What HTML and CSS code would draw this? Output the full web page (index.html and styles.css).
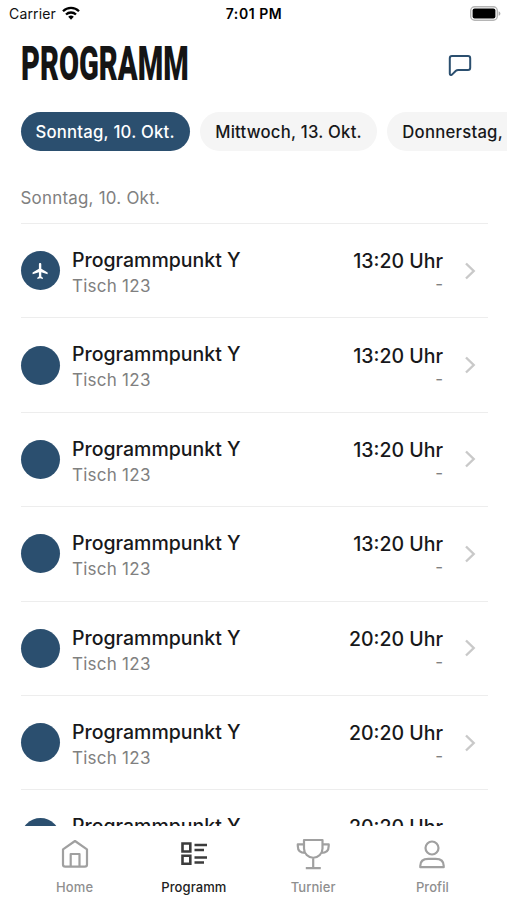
FILE: index.html
```html
<!DOCTYPE html>
<html lang="de">
<head>
<meta charset="utf-8">
<meta name="viewport" content="width=device-width, initial-scale=1">
<title>Programm</title>
<link rel="stylesheet" href="styles.css">
</head>
<body>
<div class="app">
  <div class="status">
    <div class="carrier"><span>Carrier</span>
      <svg width="18" height="14" viewBox="0 0 18 14" fill="none" stroke="#000" stroke-width="2.3"><path d="M1 5.2a11.4 11.4 0 0 1 16 0M4 8.5a7.2 7.2 0 0 1 10 0"/><path d="M9 13.7l-2.8-2.9a4 4 0 0 1 5.6 0z" fill="#000" stroke="none"/></svg>
    </div>
    <div class="clock">7:01 PM</div>
    <div class="battery"><svg width="31" height="15" viewBox="0 0 31 15"><rect x=".7" y=".7" width="26.6" height="13.6" rx="4" fill="#fff" stroke="#b5b5b5" stroke-width="1.4"/><rect x="2.6" y="2.6" width="22.8" height="9.8" rx="2" fill="#000"/><path d="M28.6 5.2c2.4 1 2.4 3.6 0 4.6z" fill="#aaa"/></svg></div>
  </div>
  <header class="header">
    <h1 class="title">PROGRAMM</h1>
    <svg class="chat" width="24" height="24" viewBox="0 0 24 24" fill="none" stroke="#2b4f6f" stroke-width="2" stroke-linejoin="round"><path d="M4 2h16q2.2 0 2.2 2.2v9.600q0 2.200-2.200 2.200H10.200q-1.400 0-2.300.8L4 20.600q-2.200 1.200-2.200-1V4.200Q1.800 2 4 2z"/></svg>
  </header>
  <div class="chips">
    <div class="chip active">Sonntag, 10. Okt.</div>
    <div class="chip">Mittwoch, 13. Okt.</div>
    <div class="chip last">Donnerstag,</div>
  </div>
  <main class="list">
    <h2 class="day">Sonntag, 10. Okt.</h2>
    <div class="row"><div class="dot"><svg width="19" height="20" viewBox="0 0 24 24" fill="#fff"><path d="M21 16v-2l-8-5V3.500C13 2.670 12.330 2 11.500 2S10 2.670 10 3.500V9l-8 5v2l8-2.500V19l-2 1.500V22l3.500-1 3.500 1v-1.500L13 19v-5.500z"/></svg></div><div class="info"><div class="name">Programmpunkt Y</div><div class="place">Tisch 123</div></div><div class="when"><div class="time">13:20 Uhr</div><div class="dash">-</div></div><svg class="chev" width="12" height="18" viewBox="0 0 12 18"><path d="M2 1.500l7.700 7.500L2 16.500"/></svg></div>
    <div class="row"><div class="dot"></div><div class="info"><div class="name">Programmpunkt Y</div><div class="place">Tisch 123</div></div><div class="when"><div class="time">13:20 Uhr</div><div class="dash">-</div></div><svg class="chev" width="12" height="18" viewBox="0 0 12 18"><path d="M2 1.500l7.700 7.500L2 16.500"/></svg></div>
    <div class="row"><div class="dot"></div><div class="info"><div class="name">Programmpunkt Y</div><div class="place">Tisch 123</div></div><div class="when"><div class="time">13:20 Uhr</div><div class="dash">-</div></div><svg class="chev" width="12" height="18" viewBox="0 0 12 18"><path d="M2 1.500l7.700 7.500L2 16.500"/></svg></div>
    <div class="row"><div class="dot"></div><div class="info"><div class="name">Programmpunkt Y</div><div class="place">Tisch 123</div></div><div class="when"><div class="time">13:20 Uhr</div><div class="dash">-</div></div><svg class="chev" width="12" height="18" viewBox="0 0 12 18"><path d="M2 1.500l7.700 7.500L2 16.500"/></svg></div>
    <div class="row"><div class="dot"></div><div class="info"><div class="name">Programmpunkt Y</div><div class="place">Tisch 123</div></div><div class="when"><div class="time">20:20 Uhr</div><div class="dash">-</div></div><svg class="chev" width="12" height="18" viewBox="0 0 12 18"><path d="M2 1.500l7.700 7.500L2 16.500"/></svg></div>
    <div class="row"><div class="dot"></div><div class="info"><div class="name">Programmpunkt Y</div><div class="place">Tisch 123</div></div><div class="when"><div class="time">20:20 Uhr</div><div class="dash">-</div></div><svg class="chev" width="12" height="18" viewBox="0 0 12 18"><path d="M2 1.500l7.700 7.500L2 16.500"/></svg></div>
    <div class="row"><div class="dot"></div><div class="info"><div class="name">Programmpunkt Y</div></div><div class="when"><div class="time">20:20 Uhr</div></div></div>
  </main>
  <nav class="tabs">
    <div class="tab"><svg width="36" height="34" viewBox="0 0 36 34"><path d="M18 4L6 12.300V27.500q0 2.200 2.200 2.200h19.600q2.200 0 2.200-2.200V12.300zM13.700 29.700V17h8.800v12.700"/></svg><span>Home</span></div>
    <div class="tab on"><svg width="36" height="34" viewBox="0 0 36 34"><path d="M6.500 6.500h7.800v8H6.500zM6.500 18.800h7.800v8H6.500zM18.500 8H31M18.500 13h9.500M18.500 20.500H31M18.500 25.500h9.500"/></svg><span>Programm</span></div>
    <div class="tab"><svg width="36" height="34" viewBox="0 0 36 34"><path d="M9 3h18.500v8.500a9.250 9.250 0 0 1-18.500 0zM9 7.300H2.800V9q0 7 7.500 7M27.500 7.300h6.200V9q0 7-7.500 7M18.200 20.800V31M10.800 31.200h15"/></svg><span>Turnier</span></div>
    <div class="tab"><svg width="36" height="34" viewBox="0 0 36 34"><circle cx="18" cy="11" r="6.500"/><path d="M6.300 30.200v-1.400q0-7 8-7h7.400q8 0 8 7v1.400z"/></svg><span>Profil</span></div>
  </nav>
</div>
</body>
</html>
```
FILE: styles.css
```css
* { box-sizing: border-box; }
body { margin: 0; background: #fff; color: #17181a; font-family: Inter, "Liberation Sans", sans-serif; }
svg { display: block; flex: none; }
.app { height: 900px; display: flex; flex-direction: column; overflow: hidden; }
.status { height: 28px; flex: none; display: grid; grid-template-columns: 1fr auto 1fr; align-items: center; padding: 0 6px 1px 9px; font-size: 14px; line-height: 18px; color: #111; }
.carrier { display: flex; align-items: center; gap: 6px; letter-spacing: .15px; }
.carrier svg { margin-top: -2px; }
.clock { font-weight: 600; font-size: 14px; letter-spacing: .55px; color: #000; margin-right: 2px; }
.battery { display: flex; justify-content: flex-end; }
.header { height: 84px; flex: none; display: flex; align-items: flex-start; justify-content: space-between; padding: 9px 35px 0 21px; }
.title { margin: 0; width: 166px; font: 900 48.500px/54px Roboto, sans-serif; color: #151515; transform: scaleX(.6); transform-origin: 0 50%; }
.chat { margin-top: 17px; }
.chips { height: 40px; flex: none; display: flex; gap: 10.500px; padding-left: 20.500px; }
.chip { flex: none; height: 39px; border-radius: 20px; background: #f5f5f5; padding: 0 15px; font-size: 16.700px; font-weight: 500; line-height: 40px; letter-spacing: .23px; white-space: nowrap; }
.chip.active { background: #2b4f6f; color: #fff; }
.chip.last { width: 180px; }
.list { flex: 1; min-height: 0; overflow: hidden; padding: 33px 19px 0 20.500px; }
.day { margin: 0; height: 38px; font-size: 16.900px; font-weight: 400; line-height: 26px; letter-spacing: .25px; color: #808080; }
.row { height: 94.400px; border-top: 1.500px solid #ededed; display: flex; align-items: center; padding-right: 12px; }
.dot { width: 39px; height: 39px; border-radius: 50%; background: #2b4f6f; display: flex; align-items: center; justify-content: center; flex: none; }
.info { margin-left: 12.500px; flex: 1; padding-top: 3.500px; }
.name, .time { font-size: 19.500px; font-weight: 500; line-height: 28px; white-space: nowrap; }
.name { line-height: 27px; }
.place, .dash { font-size: 17px; font-weight: 400; line-height: 24px; letter-spacing: .25px; color: #808080; }
.when { text-align: right; padding-top: 3px; }
.dash { line-height: 19px; padding-bottom: 3px; letter-spacing: 0; }
.row:last-child { align-items: flex-start; padding-right: 45px; }
.row:last-child .info, .row:last-child .when { padding-top: 23px; }
.row:last-child .dot { margin-top: 28px; }
.chev { margin-left: 21px; fill: none; stroke: #c9c9c9; stroke-width: 2.400; }
.tabs { height: 74px; flex: none; display: flex; padding: 11px 15px 0; background: #fff; }
.tab { flex: 1; display: flex; flex-direction: column; align-items: center; font-size: 13px; line-height: 18px; color: #8f8f8f; }
.tab svg { fill: none; stroke: #a0a0a0; stroke-width: 2.200; stroke-linejoin: round; margin-bottom: 7px; }
.tab span { font-weight: 500; letter-spacing: .08px; }
.tab.on { color: #222; }
.tab.on svg { stroke: #3c3c3c; stroke-width: 2.600; stroke-linejoin: miter; }
```
